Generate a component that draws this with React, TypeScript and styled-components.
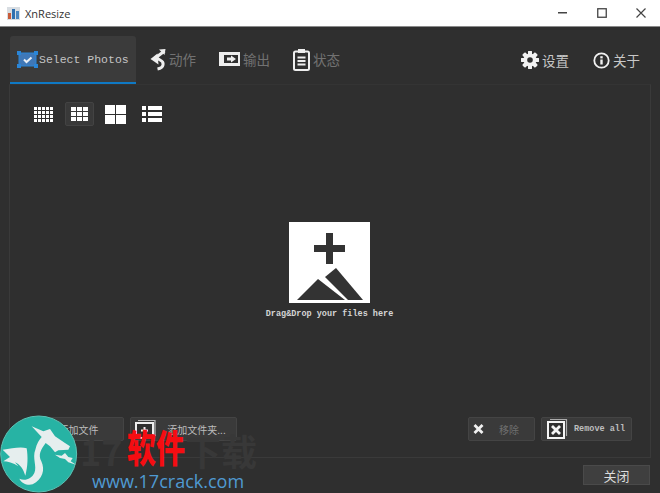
import styled, { createGlobalStyle } from "styled-components";

const GlobalStyle = createGlobalStyle`
	html, body { margin: 0; padding: 0; background: #2f2f2f; }
	* { box-sizing: border-box; }
`;

const CJK = `"Noto Sans CJK SC", "Liberation Sans", sans-serif`;
const MONO = `"Liberation Mono", "Noto Sans CJK SC", monospace`;

const Window = styled.div`
	position: relative;
	display: flex;
	flex-direction: column;
	width: 660px;
	height: 493px;
	overflow: hidden;
	background: #2f2f2f;
	color: #e6e6e6;
`;

const TitleBar = styled.div`
	display: flex;
	align-items: center;
	height: 27px;
	padding-left: 7px;
	background: #fff;
	border-bottom: 1px solid #8a8a8a;
	color: #333;
	font: 11px "Open Sans", "Liberation Sans", sans-serif;
`;

const TitleText = styled.span`
	margin-left: 5px;
	flex: 1;
`;

const WinButton = styled.div`
	display: flex;
	align-items: center;
	justify-content: center;
	width: 39px;
	height: 26px;
`;

const TabBar = styled.div`
	display: flex;
	align-items: stretch;
	height: 48px;
	margin-top: 9px;
	padding: 0 20px 0 10px;
`;

const Tab = styled.div<{ $active?: boolean }>`
	display: flex;
	align-items: center;
	gap: ${(p) => (p.$active ? "1px" : "3px")};
	width: ${(p) => (p.$active ? "126px" : "auto")};
	padding: 0 0 0 ${(p) => (p.$active ? "7px" : "0")};
	margin-right: ${(p) => (p.$active ? "14px" : "23px")};
	background: ${(p) => (p.$active ? "#3b3b3b" : "transparent")};
	border-bottom: 2px solid ${(p) => (p.$active ? "#0f79c4" : "transparent")};
	border-radius: 3px 3px 0 0;
	color: ${(p) => (p.$active ? "#c4c4c4" : "#727272")};
	font: 13.5px ${CJK};
`;

const TabMono = styled.span`
	font: 11.5px ${MONO};
`;

const Spacer = styled.div`
	flex: 1;
`;

const ToolLink = styled.div`
	display: flex;
	align-items: center;
	gap: 3px;
	margin-left: 24px;
	color: #c8c8c8;
	font: 13.5px ${CJK};
`;

const Panel = styled.div`
	display: flex;
	flex-direction: column;
	flex: 1;
	margin: 0 9px 0 9px;
	padding: 17px 18px 16px 19px;
	border-top: 1px solid #343434;
	border-right: 1px solid #3a3a3a;
	border-bottom: 1px solid #3a3a3a;
	border-left: 1px solid #3a3a3a;
`;

const ViewRow = styled.div`
	display: flex;
	align-items: center;
	gap: 7px;
`;

const ViewButton = styled.div<{ $active?: boolean }>`
	display: flex;
	align-items: center;
	justify-content: center;
	width: 29px;
	height: 24px;
	background: ${(p) => (p.$active ? "#393939" : "transparent")};
	border: 1px solid ${(p) => (p.$active ? "#434343" : "transparent")};
	border-radius: 2px;
`;

const DropArea = styled.div`
	display: flex;
	flex-direction: column;
	align-items: center;
	flex: 1;
	padding: 96px 2px 0 0;
`;

const DropText = styled.div`
	margin-top: 6px;
	color: #d4d4d4;
	font: bold 8.5px ${MONO};
`;

const ActionRow = styled.div`
	display: flex;
	align-items: center;
	gap: 6px;
`;

const ActionButton = styled.div<{ $w: number }>`
	display: flex;
	align-items: center;
	width: ${(p) => p.$w}px;
	height: 24px;
	padding-left: 4px;
	background: #3a3a3a;
	border: 1px solid #444;
	border-radius: 2px;
`;

const ActionLabel = styled.span<{ $dim?: boolean; $mono?: boolean }>`
	flex: 1;
	text-align: center;
	color: ${(p) => (p.$dim ? "#6f6f6f" : "#bdbdbd")};
	font: ${(p) => (p.$mono ? `bold 8.5px ${MONO}` : `10px ${CJK}`)};
`;

const Footer = styled.div`
	display: flex;
	justify-content: flex-end;
	height: 35px;
	padding: 7px 10px 0 0;
`;

const CloseButton = styled.div`
	display: flex;
	align-items: center;
	justify-content: center;
	width: 67px;
	height: 20px;
	background: #3f3f3f;
	border: 1px solid #4a4a4a;
	color: #dcdcdc;
	font: 13px ${CJK};
`;

const Watermark = styled.div`
	position: absolute;
	left: 0;
	bottom: 0;
	width: 262px;
	height: 78px;
	pointer-events: none;
`;

const Logo = styled.svg`
	position: absolute;
	left: 0;
	top: 0;
`;

const GhostText = styled.div<{ $x: number }>`
	position: absolute;
	left: ${(p) => p.$x}px;
	top: 14px;
	color: #383838;
	font: bold 36px ${CJK};
	line-height: 42px;
`;

const RedText = styled.div`
	position: absolute;
	left: 127px;
	top: 8px;
	color: #f50d12;
	font: 900 29px ${CJK};
	line-height: 44px;
	transform: scaleY(1.3);
`;

const SiteText = styled.div`
	position: absolute;
	left: 92px;
	top: 55px;
	color: #4f9ad2;
	font: 18px "Open Sans", "Liberation Sans", sans-serif;
	line-height: 22px;
`;

function GridIcon({ cols, rows, w, h, gap }: { cols: number; rows: number; w: number; h: number; gap: number }) {
	const cells = [];
	for (let r = 0; r < rows; r++)
		for (let c = 0; c < cols; c++)
			cells.push(<rect key={r + "-" + c} x={c * (w + gap)} y={r * (h + gap)} width={w} height={h} fill="#fff" />);
	return <svg width={cols * w + (cols - 1) * gap} height={rows * h + (rows - 1) * gap}>{cells}</svg>;
}

function ListIcon() {
	return (
		<svg width="20" height="16" fill="#fff">
			<rect x="0" y="0" width="4" height="4" />
			<rect x="6" y="0" width="14" height="4" />
			<rect x="0" y="6" width="4" height="4" />
			<rect x="6" y="6" width="14" height="4" />
			<rect x="0" y="12" width="4" height="4" />
			<rect x="6" y="12" width="14" height="4" />
		</svg>
	);
}

function AppIcon() {
	return (
		<svg width="13" height="13" viewBox="0 0 13 13">
			<rect width="13" height="13" fill="#d8dde2" />
			<rect x="1" y="6" width="3" height="6" fill="#c75b3a" />
			<rect x="5" y="2" width="3" height="10" fill="#2f6fae" />
			<rect x="9" y="4" width="3" height="8" fill="#4a86bf" />
		</svg>
	);
}

function SelectIcon() {
	return (
		<svg width="21" height="17" viewBox="0 0 21 17">
			<rect x="2" y="2" width="17" height="13" fill="#3f78b8" stroke="#2a86d8" strokeWidth="1" />
			<rect x="0" y="0" width="4" height="4" fill="#2a86d8" />
			<rect x="17" y="0" width="4" height="4" fill="#2a86d8" />
			<rect x="0" y="13" width="4" height="4" fill="#2a86d8" />
			<rect x="17" y="13" width="4" height="4" fill="#2a86d8" />
			<path d="M7 8.500l2.500 2.500 5-4.500" fill="none" stroke="#e8eef5" strokeWidth="2" />
		</svg>
	);
}

function ActionIcon() {
	return (
		<svg width="16" height="23" viewBox="0 0 16 23" fill="none">
			<path d="M14.500 3L6 9.500l4 2.500c4.500 2 4.500 7.500-2.500 9" stroke="#eee" strokeWidth="3" />
			<path d="M9 1.500L15.500 1l-1 6z" fill="#eee" />
			<path d="M.5 11L7.500 5.500 8.500 16.500z" fill="#eee" />
		</svg>
	);
}

function OutputIcon() {
	return (
		<svg width="21" height="14" viewBox="0 0 21 14">
			<rect width="21" height="14" fill="#eee" />
			<rect x="5" y="3" width="14" height="8" fill="#2f2f2f" />
			<path d="M8 5.500h4V3.500l5 3.500-5 3.500V8.500H8z" fill="#eee" />
		</svg>
	);
}

function ClipboardIcon() {
	return (
		<svg width="17" height="23" viewBox="0 0 17 23" fill="none">
			<rect x="1" y="3.500" width="15" height="18.500" rx="1.500" stroke="#eee" strokeWidth="2" />
			<rect x="5" y="1" width="7" height="4" fill="#eee" />
			<path d="M4.500 9.500h8M4.500 13h8M4.500 16.500h8" stroke="#eee" strokeWidth="1.800" />
		</svg>
	);
}

function GearIcon() {
	const teeth = [0, 45, 90, 135, 180, 225, 270, 315];
	return (
		<svg width="18" height="18" viewBox="0 0 18 18">
			{teeth.map((a) => (
				<rect key={a} x="7" y="0" width="4" height="18" rx="1" fill="#f2f2f2" transform={`rotate(${a} 9 9)`} />
			))}
			<circle cx="9" cy="9" r="6.500" fill="#f2f2f2" />
			<circle cx="9" cy="9" r="2.800" fill="#2f2f2f" />
		</svg>
	);
}

function InfoIcon() {
	return (
		<svg width="17" height="17" viewBox="0 0 17 17" fill="none">
			<circle cx="8.500" cy="8.500" r="7.200" stroke="#f2f2f2" strokeWidth="1.800" />
			<rect x="7.300" y="7.500" width="2.400" height="5" fill="#f2f2f2" />
			<rect x="7.300" y="4.200" width="2.400" height="2.200" fill="#f2f2f2" />
		</svg>
	);
}

function DropIcon() {
	return (
		<svg width="81" height="81" viewBox="0 0 81 81">
			<rect width="81" height="81" fill="#fff" />
			<path d="M37 11h7v12h12v7H44v12h-7V30H25v-7h12z" fill="#333" />
			<path d="M8 78l21-21 27 21z" fill="#333" />
			<path d="M36 55l11-9 27 32H59z" fill="#333" />
		</svg>
	);
}

function CrossIcon() {
	return (
		<svg width="11" height="10" viewBox="0 0 11 10">
			<path d="M1.500 1l8 8M9.500 1l-8 8" stroke="#f0f0f0" strokeWidth="2.800" />
		</svg>
	);
}

function StackCrossIcon() {
	return (
		<svg width="22" height="22" viewBox="0 0 22 22" fill="none">
			<path d="M4 1.500h16.500V18" stroke="#aaa" strokeWidth="1.200" />
			<rect x="2" y="4" width="16" height="16" fill="#2f2f2f" stroke="#f4f4f4" strokeWidth="2" />
			<path d="M6 8l8 8M14 8l-8 8" stroke="#f4f4f4" strokeWidth="2.800" />
		</svg>
	);
}

function FolderIcon() {
	return (
		<svg width="22" height="22" viewBox="0 0 22 22" fill="none">
			<path d="M3 2.500h17V18" stroke="#bbb" strokeWidth="1.200" />
			<rect x="1" y="5" width="17" height="15" fill="#2f2f2f" stroke="#eee" strokeWidth="2" />
			<path d="M6 12.500h7M9.500 9v7" stroke="#eee" strokeWidth="2" />
		</svg>
	);
}

// coordinates taken from a 3x crop of the logo
function DragonLogo() {
	return (
		<Logo width="78" height="78" viewBox="0 6 234 234">
			<circle cx="116" cy="123" r="114" fill="#27b3a4" stroke="#5cc4b6" strokeWidth="3" />
			<path
				d="M95 40L130 55 150 48 165 70 195 90 210 100 205 110 175 112 165 118 150 100 137 90C122 110 114 125 124 145C136 170 128 200 98 214C82 218 66 212 58 197C75 205 94 198 103 180C112 160 96 135 106 110C110 92 118 80 125 72z"
				fill="#e6eeee"
			/>
			<path d="M8 110C35 108 58 100 80 106C84 130 84 160 76 188C70 170 62 155 45 148L55 160C40 150 22 145 10 145L30 132z" fill="#e6eeee" />
			<path d="M165 125L185 128 195 120 205 132 218 135 212 145 228 155 205 148 195 138 180 135z" fill="#e6eeee" />
		</Logo>
	);
}

export default function App() {
	return (
		<Window>
			<GlobalStyle />
			<TitleBar>
				<AppIcon />
				<TitleText>XnResize</TitleText>
				<WinButton>
					<svg width="9" height="2"><rect width="9" height="1.500" fill="#444" /></svg>
				</WinButton>
				<WinButton>
					<svg width="10" height="10" fill="none"><rect x=".75" y=".75" width="8.500" height="8.500" stroke="#444" strokeWidth="1.300" /></svg>
				</WinButton>
				<WinButton>
					<svg width="10" height="10"><path d="M.5.500l9 9M9.500.500l-9 9" stroke="#444" strokeWidth="1.200" /></svg>
				</WinButton>
			</TitleBar>
			<TabBar>
				<Tab $active>
					<SelectIcon />
					<TabMono>Select Photos</TabMono>
				</Tab>
				<Tab><ActionIcon />动作</Tab>
				<Tab><OutputIcon />输出</Tab>
				<Tab><ClipboardIcon />状态</Tab>
				<Spacer />
				<ToolLink><GearIcon />设置</ToolLink>
				<ToolLink><InfoIcon />关于</ToolLink>
			</TabBar>
			<Panel>
				<ViewRow>
					<ViewButton><GridIcon cols={5} rows={4} w={3} h={3} gap={1} /></ViewButton>
					<ViewButton $active><GridIcon cols={3} rows={3} w={5} h={4} gap={1} /></ViewButton>
					<ViewButton><GridIcon cols={2} rows={2} w={10} h={9} gap={1} /></ViewButton>
					<ViewButton><ListIcon /></ViewButton>
				</ViewRow>
				<DropArea>
					<DropIcon />
					<DropText>Drag&amp;Drop your files here</DropText>
				</DropArea>
				<ActionRow>
					<ActionButton $w={95}><ActionLabel>添加文件</ActionLabel></ActionButton>
					<ActionButton $w={107}>
						<FolderIcon />
						<ActionLabel>添加文件夹...</ActionLabel>
					</ActionButton>
					<Spacer />
					<ActionButton $w={67}>
						<CrossIcon />
						<ActionLabel $dim>移除</ActionLabel>
					</ActionButton>
					<ActionButton $w={91}>
						<StackCrossIcon />
						<ActionLabel $mono>Remove all</ActionLabel>
					</ActionButton>
				</ActionRow>
			</Panel>
			<Footer>
				<CloseButton>关闭</CloseButton>
			</Footer>
			<Watermark>
				<GhostText $x={80}>17</GhostText>
				<GhostText $x={185}>下载</GhostText>
				<DragonLogo />
				<RedText>软件</RedText>
				<SiteText>www.17crack.com</SiteText>
			</Watermark>
		</Window>
	);
}
